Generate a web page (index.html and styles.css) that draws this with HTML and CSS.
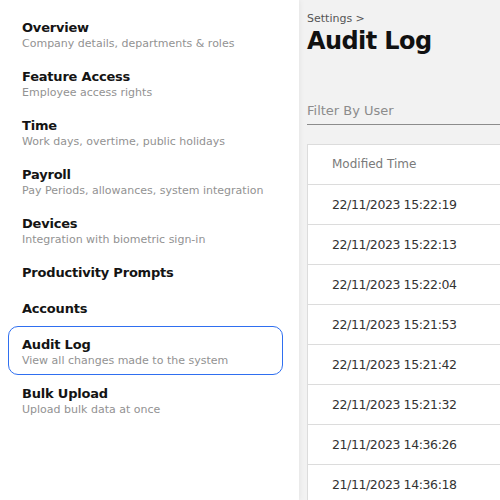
FILE: index.html
```html
<!DOCTYPE html>
<html>
<head>
<meta charset="utf-8">
<link rel="stylesheet" href="styles.css">
</head>
<body>
<div class="layout">
  <nav class="sidebar">
    <div class="item"><div class="title">Overview</div><div class="sub">Company details, departments &amp; roles</div></div>
    <div class="item"><div class="title">Feature Access</div><div class="sub">Employee access rights</div></div>
    <div class="item"><div class="title">Time</div><div class="sub">Work days, overtime, public holidays</div></div>
    <div class="item"><div class="title">Payroll</div><div class="sub">Pay Periods, allowances, system integration</div></div>
    <div class="item"><div class="title">Devices</div><div class="sub">Integration with biometric sign-in</div></div>
    <div class="item"><div class="title">Productivity Prompts</div></div>
    <div class="item"><div class="title">Accounts</div></div>
    <div class="item active"><div class="title">Audit Log</div><div class="sub">View all changes made to the system</div></div>
    <div class="item"><div class="title">Bulk Upload</div><div class="sub">Upload bulk data at once</div></div>
  </nav>
  <main class="main">
    <div class="crumb">Settings &gt;</div>
    <h1 class="page-title">Audit Log</h1>
    <div class="filter">Filter By User</div>
    <div class="table">
      <div class="row head">Modified Time</div>
      <div class="row">22/11/2023 15:22:19</div>
      <div class="row">22/11/2023 15:22:13</div>
      <div class="row">22/11/2023 15:22:04</div>
      <div class="row">22/11/2023 15:21:53</div>
      <div class="row">22/11/2023 15:21:42</div>
      <div class="row">22/11/2023 15:21:32</div>
      <div class="row">21/11/2023 14:36:26</div>
      <div class="row">21/11/2023 14:36:18</div>
    </div>
  </main>
</div>
</body>
</html>
```
FILE: styles.css
```css
html, body {
  margin: 0;
  padding: 0;
  height: 100%;
  overflow: hidden;
}
body {
  font-family: "DejaVu Sans", "Open Sans", sans-serif;
  background: #f2f2f2;
}
.layout {
  display: flex;
  height: 100%;
}
.sidebar {
  width: 299px;
  flex: 0 0 299px;
  box-sizing: border-box;
  background: #ffffff;
  padding: 9px 16px 0 8px;
  box-shadow: 0 0 6px rgba(0, 0, 0, 0.08);
  position: relative;
  z-index: 1;
}
.item {
  box-sizing: border-box;
  border: 1px solid transparent;
  border-radius: 10px;
  padding: 8px 13px 7px;
}
.item.active {
  border-color: #2f6ff0;
}
.title {
  font-size: 13px;
  line-height: 19px;
  font-weight: 700;
  color: #141414;
  letter-spacing: -0.2px;
}
.sub {
  font-size: 11px;
  line-height: 13px;
  color: #929292;
}
.main {
  flex: 1;
  padding: 12px 0 0 8px;
  min-width: 0;
}
.crumb {
  font-size: 11px;
  line-height: 14px;
  color: #555555;
}
.page-title {
  margin: 0;
  font-size: 24px;
  line-height: 30px;
  font-weight: 700;
  color: #111111;
  letter-spacing: -0.6px;
}
.filter {
  margin-top: 41px;
  height: 27px;
  line-height: 27px;
  font-size: 13px;
  color: #8c8c8c;
  border-bottom: 1px solid #8c8c8c;
}
.table {
  margin-top: 19px;
  width: 400px;
  background: #ffffff;
  border: 1px solid #dcdcdc;
}
.row {
  box-sizing: border-box;
  height: 40px;
  line-height: 39px;
  padding-left: 24px;
  font-size: 12.5px;
  letter-spacing: -0.4px;
  color: #333333;
  border-top: 1px solid #dcdcdc;
}
.row.head {
  border-top: none;
  height: 39px;
  line-height: 39px;
  font-size: 12px;
  letter-spacing: 0;
  color: #7a7a7a;
}
```
